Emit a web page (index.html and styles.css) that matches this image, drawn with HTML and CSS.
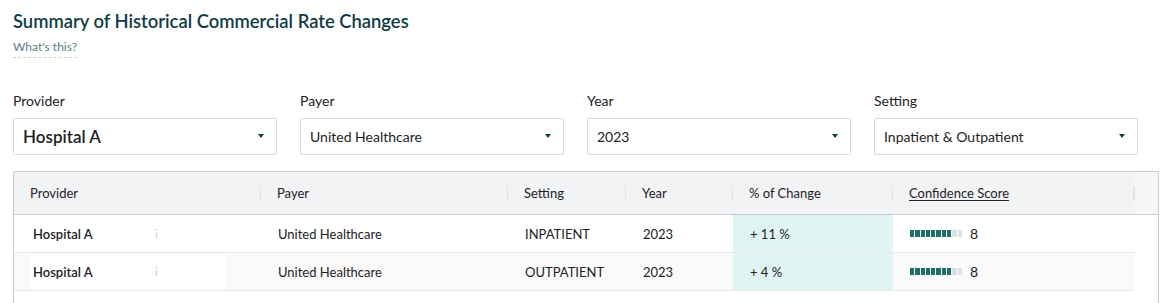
FILE: index.html
```html
<!DOCTYPE html>
<html lang="en">
<head>
<meta charset="UTF-8">
<meta name="viewport" content="width=device-width, initial-scale=1.0">
<title>Historical Commercial Rate Changes</title>
<link rel="stylesheet" href="styles.css">
</head>
<body>
<div class="page">
  <h1 class="title">Summary of Historical Commercial Rate Changes</h1>
  <a class="help">What's this?</a>

  <div class="filters">
    <div class="filter">
      <label>Provider</label>
      <div class="select select-big">Hospital A <span class="caret"></span></div>
    </div>
    <div class="filter">
      <label>Payer</label>
      <div class="select">United Healthcare <span class="caret"></span></div>
    </div>
    <div class="filter">
      <label>Year</label>
      <div class="select">2023 <span class="caret"></span></div>
    </div>
    <div class="filter">
      <label>Setting</label>
      <div class="select">Inpatient &amp; Outpatient <span class="caret"></span></div>
    </div>
  </div>

  <div class="table-wrap">
    <table class="rates">
      <thead>
        <tr>
          <th class="c-provider">Provider</th>
          <th class="c-payer">Payer</th>
          <th class="c-setting">Setting</th>
          <th class="c-year">Year</th>
          <th class="c-change">% of Change</th>
          <th class="c-score"><u>Confidence Score</u></th>
        </tr>
      </thead>
      <tbody>
        <tr>
          <td class="provider"><div class="provider-box"><span class="name">Hospital A</span><span class="info">i</span></div></td>
          <td>United Healthcare</td>
          <td>INPATIENT</td>
          <td>2023</td>
          <td class="change">+ 11 %</td>
          <td>
            <div class="score">
              <span class="bars"><i class="on"></i><i class="on"></i><i class="on"></i><i class="on"></i><i class="on"></i><i class="on"></i><i class="on"></i><i class="on"></i><i></i><i></i></span>
              8
            </div>
          </td>
        </tr>
        <tr>
          <td class="provider"><div class="provider-box"><span class="name">Hospital A</span><span class="info">i</span></div></td>
          <td>United Healthcare</td>
          <td>OUTPATIENT</td>
          <td>2023</td>
          <td class="change">+ 4 %</td>
          <td>
            <div class="score">
              <span class="bars"><i class="on"></i><i class="on"></i><i class="on"></i><i class="on"></i><i class="on"></i><i class="on"></i><i class="on"></i><i class="on"></i><i></i><i></i></span>
              8
            </div>
          </td>
        </tr>
      </tbody>
    </table>
  </div>
</div>
</body>
</html>
```

FILE: styles.css
```css
body {
  margin: 0;
  font-family: Lato, "Noto Sans", sans-serif;
  color: #1e2226;
  background: #ffffff;
}
.page {
  padding: 9px 14px 0 13px;
}
.title {
  margin: 0;
  font-size: 18.4px;
  font-weight: 600;
  line-height: 24px;
  color: #0f3d46;
}
.help {
  display: inline-block;
  margin-top: 6px;
  font-size: 12px;
  line-height: 15px;
  color: #5d7d84;
  padding-bottom: 3px;
  border-bottom: 1px dashed #c9d3d6;
}
.filters {
  display: grid;
  grid-template-columns: repeat(4, 264px);
  column-gap: 23px;
  margin-top: 34px;
}
.filter label {
  display: block;
  font-size: 14px;
  line-height: 18px;
  margin-bottom: 8px;
}
.select {
  position: relative;
  height: 37px;
  box-sizing: border-box;
  border: 1px solid #d8dbe0;
  border-radius: 2px;
  padding: 0 30px 0 9px;
  font-size: 14px;
  line-height: 35px;
}
.select-big {
  font-size: 17px;
  font-weight: 600;
}
.caret {
  position: absolute;
  right: 12px;
  top: 15px;
  border-left: 3.5px solid transparent;
  border-right: 3.5px solid transparent;
  border-top: 4px solid #173c44;
}
.table-wrap {
  margin-top: 16px;
  width: 1146px;
  height: 140px;
  box-sizing: border-box;
  border: 1px solid #c9ccd2;
  border-bottom: none;
  border-radius: 2px 2px 0 0;
  background: linear-gradient(#f6f6f7 0 42px, #c9ccd2 42px 43px, #ffffff 43px);
}
.rates {
  width: 1120px;
  border-collapse: collapse;
  table-layout: fixed;
  font-size: 13px;
}
.rates th {
  position: relative;
  height: 42px;
  background: #f2f3f5;
  text-align: left;
  font-weight: 400;
  font-size: 13px;
  padding: 0 0 0 16px;
  border-bottom: 1px solid #c9ccd2;
}
.rates th::after {
  content: "";
  position: absolute;
  right: -1px;
  top: 14px;
  width: 2px;
  height: 14px;
  background: #dfe2e6;
}
.rates th u {
  text-underline-offset: 2px;
}
.c-provider, .c-payer { width: 231px; }
.c-setting { width: 102px; }
.c-year { width: 91px; }
.c-change { width: 144px; }
.rates td {
  height: 37px;
  padding: 0 0 0 17px;
  border-bottom: 1px solid #e6e8eb;
  white-space: nowrap;
}
.rates tbody tr:nth-child(2) td {
  background: #fafafa;
}
.rates td.provider {
  padding-left: 16px;
}
.provider-box {
  display: flex;
  align-items: center;
  width: 195px;
  height: 36px;
  padding-left: 3px;
  box-sizing: border-box;
}
.rates tbody tr:nth-child(2) .provider-box {
  background: #ffffff;
}
.name {
  width: 122px;
  font-weight: 600;
}
.info {
  color: #c4c7cc;
  font-size: 11px;
}
.rates td.change {
  background: #e0f4f3 !important;
}
.score {
  display: flex;
  align-items: center;
  gap: 8px;
  font-size: 14px;
}
.bars {
  display: flex;
  gap: 1px;
}
.bars i {
  width: 4.3px;
  height: 7px;
  background: #dde0e4;
}
.bars i.on {
  background: #1e6e6a;
}
```
